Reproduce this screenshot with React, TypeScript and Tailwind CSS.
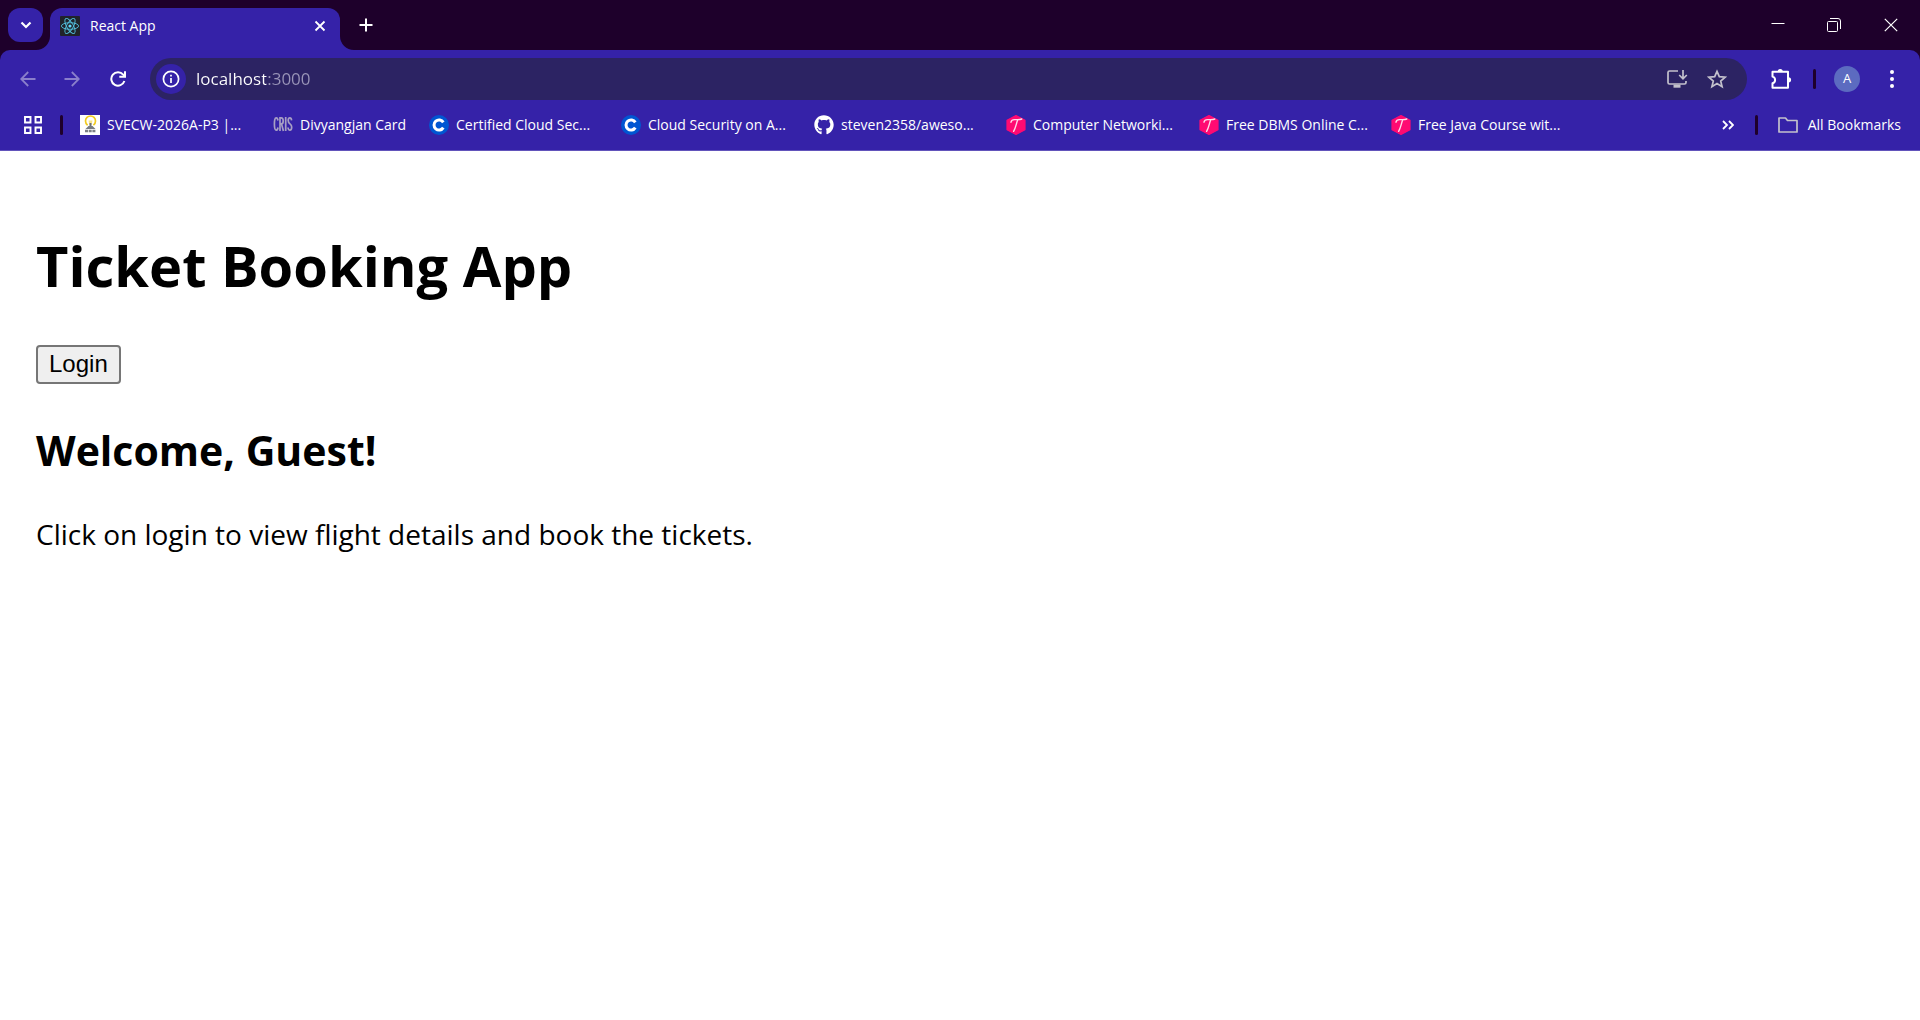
import { useState, type ReactNode } from "react";
import { FaGithub } from "react-icons/fa";

function ReactFavicon() {
  return (
    <svg viewBox="0 0 20 20" className="size-5 shrink-0" fill="none" aria-hidden="true">
      <rect width="20" height="20" rx="1" fill="#20232a" />
      <circle cx="10" cy="10" r="1.6" fill="#61dafb" />
      <g stroke="#53c1de" strokeWidth="0.9">
        <ellipse cx="10" cy="10" rx="8.6" ry="3.3" />
        <ellipse cx="10" cy="10" rx="8.6" ry="3.3" transform="rotate(60 10 10)" />
        <ellipse cx="10" cy="10" rx="8.6" ry="3.3" transform="rotate(120 10 10)" />
      </g>
    </svg>
  );
}

function BulbIcon() {
  return (
    <svg viewBox="0 0 20 20" className="size-5 shrink-0" fill="none" aria-hidden="true">
      <rect width="20" height="20" fill="#fff" />
      <path d="M7.600 10.200C6 9 5.500 7.500 5.500 6a5 5 0 0 1 10 0c0 1.500-.6 3-2.100 4.200" stroke="#f2cb1d" strokeWidth="1.700" />
      <path d="M8.500 5.500h4l-1 4.500h-2z" fill="#f7e48a" />
      <path d="M10.500 8v5" stroke="#6b6f78" strokeWidth="2" />
      <path d="M5.500 14 8.500 11h4l3 3z" fill="#777b82" />
      <path d="M5 16h11" stroke="#7c7f86" strokeWidth="2.600" strokeDasharray="3 .7" />
    </svg>
  );
}

function CrisIcon() {
  return (
    <svg viewBox="0 0 20 20" className="size-5 shrink-0" fill="none" stroke="#a79fc4" strokeWidth="1.700" aria-hidden="true">
      <path d="M5 5.500C4.700 3.500 4 2.800 3.200 2.800 1.800 2.800 1.400 5.500 1.400 9s.4 6.200 1.800 6.200c.8 0 1.500-.7 1.800-2.700" />
      <path d="M7 16V2.900h1.200c1.400 0 2 1 2 3s-.6 3-2 3H7m1.600.2L10.400 16" />
      <path d="M12.700 2v14" />
      <path d="M18.600 5.300c-.2-1.700-.8-2.500-1.700-2.500-1.100 0-1.700 1-1.700 2.700 0 4 3.500 2.700 3.500 6.500 0 2-.7 3.200-1.800 3.200-1 0-1.700-.9-1.900-2.700" />
    </svg>
  );
}

function CourseraIcon() {
  return (
    <svg viewBox="0 0 20 20" className="size-5 shrink-0" fill="none" aria-hidden="true">
      <circle cx="10" cy="10" r="10" fill="#0056d2" />
      <path d="M14.300 7.400A5 5 0 1 0 14.300 12.600" stroke="#fff" strokeWidth="3" />
    </svg>
  );
}

function HexIcon() {
  return (
    <svg viewBox="0 0 20 20" className="size-5 shrink-0" fill="none" aria-hidden="true">
      <path d="M10 .6 19 5.300v9.400L10 19.400 1 14.700V5.300z" fill="#ff0a72" stroke="#ff0a72" strokeWidth="1.200" strokeLinejoin="round" />
      <path d="M5 7.200c.3-1.900 1.600-2.600 3.500-2.600 2.800 0 5.200.4 7.300-.6M11.800 4.800C10.300 8 9.800 13 7.600 16.300" stroke="#ffd9ea" strokeWidth="1.400" strokeLinecap="round" />
    </svg>
  );
}

function GithubIcon() {
  return <FaGithub className="size-5 shrink-0 text-white" aria-hidden="true" />;
}

type Bookmark = { title: string; icon: () => ReactNode; width: string };

const bookmarks: Bookmark[] = [
  { title: "SVECW-2026A-P3 |...", icon: BulbIcon, width: "w-[193px]" },
  { title: "Divyangjan Card", icon: CrisIcon, width: "w-[156px]" },
  { title: "Certified Cloud Sec...", icon: CourseraIcon, width: "w-[192px]" },
  { title: "Cloud Security on A...", icon: CourseraIcon, width: "w-[193px]" },
  { title: "steven2358/aweso...", icon: GithubIcon, width: "w-[192px]" },
  { title: "Computer Networki...", icon: HexIcon, width: "w-[193px]" },
  { title: "Free DBMS Online C...", icon: HexIcon, width: "w-[192px]" },
  { title: "Free Java Course wit...", icon: HexIcon, width: "w-[192px]" },
];

function IconButton({ label, className, children }: { label: string; className: string; children: ReactNode }) {
  return (
    <button type="button" aria-label={label} className={`flex shrink-0 items-center justify-center ${className}`}>
      {children}
    </button>
  );
}

function Divider() {
  return <span className="h-5 w-[3px] shrink-0 rounded-full bg-[#1e002b]" />;
}

function TabStrip() {
  return (
    <div className="flex h-[50px] items-start bg-[#1e002b]">
      <IconButton label="Search tabs" className="mt-2 ml-2 h-[34px] w-[35px] rounded-xl bg-[#3522a8]">
        <svg viewBox="0 0 12 12" className="size-3" fill="none" stroke="#fff" strokeWidth="2.200" aria-hidden="true">
          <path d="m1.500 3.500 4.500 4.500 4.500-4.500" />
        </svg>
      </IconButton>
      <div className="relative mt-2 ml-[7px] flex h-[42px] w-[290px] items-start rounded-t-xl bg-[#3522a8] pr-3 pl-[10px]">
        <svg viewBox="0 0 14 14" className="absolute bottom-0 -left-[14px] size-[14px]" aria-hidden="true">
          <path d="M14 0v14H0A14 14 0 0 0 14 0z" fill="#3522a8" />
        </svg>
        <svg viewBox="0 0 14 14" className="absolute -right-[14px] bottom-0 size-[14px]" aria-hidden="true">
          <path d="M0 0v14h14A14 14 0 0 1 0 0z" fill="#3522a8" />
        </svg>
        <div className="flex h-[35px] flex-1 items-center">
          <ReactFavicon />
          <span className="ml-[10px] flex-1 text-[14px] leading-5 text-white">React App</span>
          <IconButton label="Close tab" className="size-4">
            <svg viewBox="0 0 12 12" className="size-3" fill="none" stroke="#fff" strokeWidth="1.800" aria-hidden="true">
              <path d="m1.500 1.500 9 9m0-9-9 9" />
            </svg>
          </IconButton>
        </div>
      </div>
      <IconButton label="New tab" className="mt-[11px] ml-3 size-7">
        <svg viewBox="0 0 14 14" className="size-[14px]" fill="none" stroke="#fff" strokeWidth="2" aria-hidden="true">
          <path d="M7 .5v13M.5 7h13" />
        </svg>
      </IconButton>
      <div className="ml-auto flex h-[50px] items-center">
        <IconButton label="Minimize" className="h-full w-14">
          <svg viewBox="0 0 14 14" className="size-[14px]" fill="none" stroke="#fff" aria-hidden="true">
            <path d="M.5 5.500h13" />
          </svg>
        </IconButton>
        <IconButton label="Restore" className="h-full w-14">
          <svg viewBox="0 0 14 14" className="size-[14px]" fill="none" stroke="#fff" aria-hidden="true">
            <rect x=".5" y="3.500" width="10" height="10" rx="1" />
            <path d="M3 .5h8a2.500 2.500 0 0 1 2.500 2.500V11" />
          </svg>
        </IconButton>
        <IconButton label="Close" className="h-full w-[58px]">
          <svg viewBox="0 0 14 14" className="size-[14px]" fill="none" stroke="#fff" strokeWidth="1.200" aria-hidden="true">
            <path d="m.8.8 12.400 12.400m0-12.400L.8 13.200" />
          </svg>
        </IconButton>
      </div>
    </div>
  );
}

function Toolbar() {
  return (
    <div className="flex h-[58px] items-center">
      <IconButton label="Back" className="ml-[10px] size-9">
        <svg viewBox="0 0 16 16" className="size-4" fill="none" stroke="#8a7fcb" strokeWidth="1.800" aria-hidden="true">
          <path d="M15.500 8H1.500M8.200 1 1.200 8l7 7" />
        </svg>
      </IconButton>
      <IconButton label="Forward" className="ml-2 size-9">
        <svg viewBox="0 0 16 16" className="size-4" fill="none" stroke="#8a7fcb" strokeWidth="1.800" aria-hidden="true">
          <path d="M.5 8h14M7.800 1l7 7-7 7" />
        </svg>
      </IconButton>
      <IconButton label="Reload" className="ml-[10px] size-9">
        <svg viewBox="0 0 16 16" className="size-4" fill="none" stroke="#fff" strokeWidth="2" aria-hidden="true">
          <path d="M14.400 10A6.700 6.700 0 1 1 13.200 3.700L14.600 5.500" />
          <path d="M15 .3v5.500H9.300" />
        </svg>
      </IconButton>
      <div className="ml-[14px] flex h-[42px] min-w-0 flex-1 items-center rounded-full bg-[#2c2363] pl-[6px]">
        <IconButton label="View site information" className="size-[30px] rounded-full bg-[#3522a8]">
          <svg viewBox="0 0 18 18" className="size-[18px]" fill="none" stroke="#fff" strokeWidth="1.700" aria-hidden="true">
            <circle cx="9" cy="9" r="7.600" />
            <path d="M9 8v5M9 4.800v1.800" />
          </svg>
        </IconButton>
        <input
          aria-label="Address"
          defaultValue="localhost:3000"
          className="ml-[10px] min-w-0 flex-1 bg-linear-to-r from-white from-[70px] to-[#9a95b8] to-[70px] bg-clip-text text-[17px] leading-6 text-transparent outline-none"
        />
        <IconButton label="Install app" className="h-7 w-8">
          <svg viewBox="0 0 22 20" className="h-5 w-[22px]" fill="none" stroke="#c3c1cc" strokeWidth="1.700" aria-hidden="true">
            <path d="M12 2H3.500A1.500 1.500 0 0 0 2 3.500v10A1.500 1.500 0 0 0 3.500 15h15a1.500 1.500 0 0 0 1.500-1.500V12" />
            <path d="M17 1v8.500M13.200 6 17 9.800 20.800 6" />
            <path d="M7.500 17.200h7" strokeWidth="3" />
          </svg>
        </IconButton>
        <IconButton label="Bookmark this page" className="mr-[14px] ml-2 h-7 w-8">
          <svg viewBox="0 0 20 20" className="size-5" fill="none" stroke="#c3c1cc" strokeWidth="1.700" aria-hidden="true">
            <path d="m10 2.300 2.300 5.400 5.900.5-4.500 3.800 1.400 5.700-5.100-3.100-5.100 3.100 1.400-5.700-4.500-3.800 5.900-.5z" />
          </svg>
        </IconButton>
      </div>
      <IconButton label="Extensions" className="ml-[18px] size-8">
        <svg viewBox="0 0 22 22" className="size-[22px]" fill="none" stroke="#fff" strokeWidth="2" aria-hidden="true">
          <path d="M2.500 3.800h15.500v16H2.500v-4.600c1.600-.4 2.600-1.600 2.600-3.300s-1-2.900-2.600-3.300z" strokeLinejoin="round" />
          <path d="M7.600 3.500a2.600 2.600 0 0 1 5.200 0zM18.500 9.200a2.600 2.600 0 0 1 0 5.200z" fill="#fff" stroke="none" />
        </svg>
      </IconButton>
      <span className="ml-4 flex">
        <Divider />
      </span>
      <IconButton label="Profile" className="ml-[18px] size-[26px] rounded-full bg-[#5c6bc0] text-[13px] text-white">
        A
      </IconButton>
      <IconButton label="Menu" className="mr-[12px] ml-[16px] size-8">
        <svg viewBox="0 0 4 18" className="h-[18px] w-1" fill="#fff" aria-hidden="true">
          <circle cx="2" cy="2" r="2" />
          <circle cx="2" cy="9" r="2" />
          <circle cx="2" cy="16" r="2" />
        </svg>
      </IconButton>
    </div>
  );
}

function BookmarkBar() {
  return (
    <nav aria-label="Bookmarks" className="flex h-[43px] items-center border-b border-[#6253bb] pb-2 text-[14px] leading-5 text-white">
      <IconButton label="Apps" className="ml-[23px] size-5">
        <svg viewBox="0 0 18 18" className="size-[18px]" fill="none" stroke="#fff" strokeWidth="1.900" aria-hidden="true">
          <path d="M1 1h5.500v5.500H1zM11.500 1H17v5.500h-5.500zM1 11.500h5.500V17H1zM11.500 11.500H17V17h-5.500z" />
        </svg>
      </IconButton>
      <span className="mx-[17px] flex">
        <Divider />
      </span>
      <ul className="flex min-w-0 flex-1 overflow-hidden">
        {bookmarks.map(({ title, icon: Icon, width }) => (
          <li key={title} className={`shrink-0 ${width}`}>
            <a href="#" className="flex items-center gap-[7px] whitespace-nowrap">
              <Icon />
              {title}
            </a>
          </li>
        ))}
      </ul>
      <IconButton label="More bookmarks" className="size-6">
        <svg viewBox="0 0 12 12" className="size-3" fill="none" stroke="#fff" strokeWidth="1.800" aria-hidden="true">
          <path d="m1 2 4 4-4 4M7 2l4 4-4 4" />
        </svg>
      </IconButton>
      <span className="mr-5 ml-[15px] flex">
        <Divider />
      </span>
      <a href="#" className="mr-[19px] flex items-center gap-[10px] whitespace-nowrap">
        <svg viewBox="0 0 20 16" className="h-4 w-5" fill="none" stroke="#c3c1cc" strokeWidth="1.700" aria-hidden="true">
          <path d="M1 1h6.500l2 2.500H19V15H1z" strokeLinejoin="round" />
        </svg>
        All Bookmarks
      </a>
    </nav>
  );
}

export default function App() {
  const [loggedIn, setLoggedIn] = useState(false);
  return (
    <div className="min-h-screen bg-white font-['Open_Sans','Noto_Sans',sans-serif] text-black">
      <header className="bg-[#1e002b]">
        <TabStrip />
        <div className="rounded-t-[10px] bg-[#3522a8]">
          <Toolbar />
          <BookmarkBar />
        </div>
      </header>
      <main className="px-9 pt-[76px]">
        <h1 className="text-[56px] leading-[76px] font-bold">Ticket Booking App</h1>
        <button
          type="button"
          onClick={() => setLoggedIn(!loggedIn)}
          className="mt-[42px] block rounded-[4px] border-2 border-[#767676] bg-[#efefef] px-[11px] pt-[2px] pb-1 font-['Liberation_Sans',Arial,sans-serif] text-[24px] leading-[29px]"
        >
          {loggedIn ? "Logout" : "Login"}
        </button>
        <h2 className="mt-[38px] text-[41px] leading-[57px] font-bold">Welcome, Guest!</h2>
        <p className="mt-[36px] text-[28px] leading-[38px]">Click on login to view flight details and book the tickets.</p>
      </main>
    </div>
  );
}
